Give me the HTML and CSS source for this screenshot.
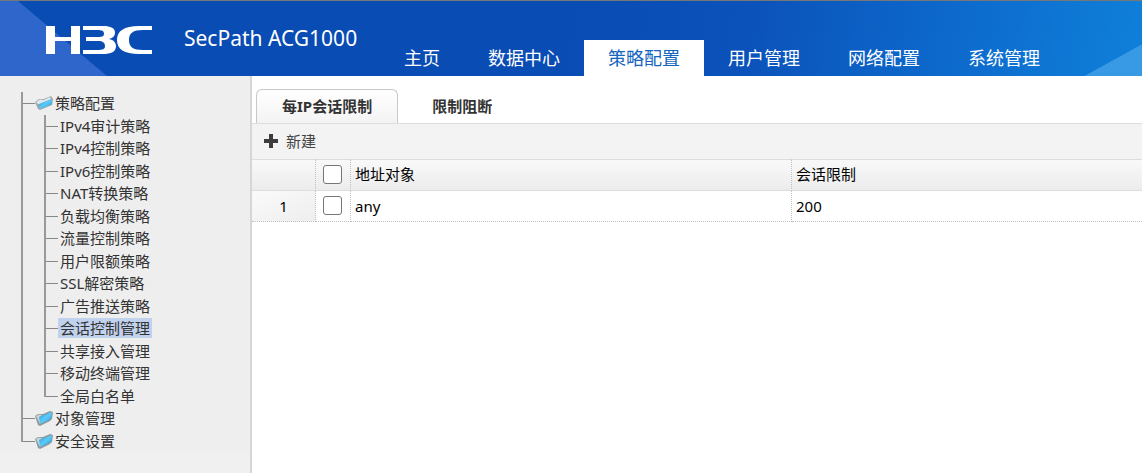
FILE: index.html
```html
<!DOCTYPE html>
<html lang="zh-CN">
<head>
<meta charset="utf-8">
<title>SecPath ACG1000</title>
<link rel="stylesheet" href="styles.css">
</head>
<body>
<svg class="defs" aria-hidden="true">
  <defs>
    <linearGradient id="sheet" x1="0" y1="0" x2="1" y2="1">
      <stop offset="0" stop-color="#2494d2"/>
      <stop offset="0.5" stop-color="#5ccbfa"/>
      <stop offset="1" stop-color="#1f8fcf"/>
    </linearGradient>
    <symbol id="folder-open" viewBox="0 0 18 16">
      <path d="M0 7L4 4L9 4L16 1L18 4L17 10L5 15L3 14Z" fill="#9aa6aa"/>
      <path d="M1 7L5 4.500L9 5L15 2L16 4L5 9L3 9Z" fill="#dfe9ec"/>
      <path d="M4 9L17 4L17 9L5 14Z" fill="url(#sheet)"/>
    </symbol>
    <symbol id="folder-closed" viewBox="0 0 18 16">
      <path d="M0 6L3 4L8 4L15 1L18 2L17 9L15 11L5 16L3 15Z" fill="#8c999e"/>
      <path d="M1 6L4 4.500L7 5L5 7L5 14Z" fill="#c9d3d6"/>
      <path d="M4 7L17 2L16 9L5 14Z" fill="url(#sheet)"/>
    </symbol>
  </defs>
</svg>
<header class="header">
  <svg class="logo" viewBox="0 0 106 28" role="img" aria-label="H3C">
    <g fill="#fff">
      <rect x="0" y="0" width="9" height="28"/>
      <rect x="25" y="0" width="9" height="28"/>
      <rect x="9" y="11" width="16" height="4"/>
      <path d="M37 0H57C65 0 69 2 69 7C69 10 67 12 63 13C68 14 70 17 70 20C70 26 65 28 57 28H37V24H51C57 24 59 23 59 20C59 17 57 15 52 15H40V11H52C57 11 58 10 58 7.500C58 5 56 4 51 4H37Z"/>
      <path d="M106 0V4H97C87 4 83 7 83 14C83 21 87 24 97 24H106V28H93C78 28 71 23 71 14C71 5 78 0 93 0Z"/>
    </g>
  </svg>
  <h1 class="product">SecPath ACG1000</h1>
  <nav class="nav">
    <a class="nav-link" href="#">主页</a>
    <a class="nav-link" href="#">数据中心</a>
    <a class="nav-link nav-active" href="#" aria-current="page">策略配置</a>
    <a class="nav-link" href="#">用户管理</a>
    <a class="nav-link" href="#">网络配置</a>
    <a class="nav-link" href="#">系统管理</a>
  </nav>
</header>
<div class="layout">
  <aside class="sidebar">
    <ul class="tree">
      <li class="branch">
        <a class="folder-link" href="#"><svg class="folder"><use href="#folder-open"/></svg>策略配置</a>
        <ul class="leaves">
          <li class="leaf"><a class="leaf-link" href="#">IPv4审计策略</a></li>
          <li class="leaf"><a class="leaf-link" href="#">IPv4控制策略</a></li>
          <li class="leaf"><a class="leaf-link" href="#">IPv6控制策略</a></li>
          <li class="leaf"><a class="leaf-link" href="#">NAT转换策略</a></li>
          <li class="leaf"><a class="leaf-link" href="#">负载均衡策略</a></li>
          <li class="leaf"><a class="leaf-link" href="#">流量控制策略</a></li>
          <li class="leaf"><a class="leaf-link" href="#">用户限额策略</a></li>
          <li class="leaf"><a class="leaf-link" href="#">SSL解密策略</a></li>
          <li class="leaf"><a class="leaf-link" href="#">广告推送策略</a></li>
          <li class="leaf"><a class="leaf-link leaf-active" href="#">会话控制管理</a></li>
          <li class="leaf"><a class="leaf-link" href="#">共享接入管理</a></li>
          <li class="leaf"><a class="leaf-link" href="#">移动终端管理</a></li>
          <li class="leaf"><a class="leaf-link" href="#">全局白名单</a></li>
        </ul>
      </li>
      <li class="branch"><a class="folder-link" href="#"><svg class="folder"><use href="#folder-closed"/></svg>对象管理</a></li>
      <li class="branch"><a class="folder-link" href="#"><svg class="folder"><use href="#folder-closed"/></svg>安全设置</a></li>
    </ul>
  </aside>
  <main class="main">
    <div class="tabs">
      <button class="tab tab-active" type="button">每IP会话限制</button>
      <button class="tab" type="button">限制阻断</button>
    </div>
    <div class="toolbar">
      <button class="add" type="button">
        <svg class="plus" viewBox="0 0 14 14" aria-hidden="true"><path d="M5 0H9V5H14V9H9V14H5V9H0V5H5Z" fill="#3c3c3c"/></svg>新建
      </button>
    </div>
    <table class="grid">
      <thead>
        <tr>
          <th class="num"></th>
          <th class="check"><input class="box" type="checkbox" aria-label="全选"></th>
          <th class="address">地址对象</th>
          <th>会话限制</th>
        </tr>
      </thead>
      <tbody>
        <tr>
          <td class="num">1</td>
          <td class="check"><input class="box" type="checkbox" aria-label="any"></td>
          <td class="address">any</td>
          <td>200</td>
        </tr>
      </tbody>
    </table>
  </main>
</div>
</body>
</html>
```
FILE: styles.css
```css
* {
  box-sizing: border-box;
}

body {
  margin: 0;
  min-height: 100vh;
  display: flex;
  flex-direction: column;
  background: #fff;
  color: #333;
  font: 15px "Noto Sans", "Noto Sans CJK SC", sans-serif;
}

a {
  color: inherit;
  text-decoration: none;
}

button {
  font: inherit;
  color: inherit;
  cursor: pointer;
}

.defs {
  position: absolute;
  width: 0;
  height: 0;
}

.header {
  display: flex;
  height: 76px;
  border-top: 1px solid #777;
  color: #fff;
  background:
    linear-gradient(to bottom right, transparent 50%, #3899e4 51%) right bottom / 58px 32px no-repeat,
    linear-gradient(100deg, #094cb4 0, #094cb4 50%, #0b52ba 65%, #0d6bcd 84%, #0f80da 100%);
  position: relative;
}

.header::before {
  content: "";
  position: absolute;
  inset: 0 auto 0 0;
  width: 107px;
  background: #2e66cb;
  clip-path: polygon(0 0, 18px 0, 107px 100%, 0 100%);
}

.logo {
  position: relative;
  width: 106px;
  height: 28px;
  margin: 25px 32px 0 46px;
}

.product {
  width: 196px;
  margin: 0;
  padding-top: 23px;
  font-size: 21px;
  line-height: 28px;
  font-weight: 400;
  white-space: nowrap;
}

.nav {
  display: flex;
  align-items: flex-end;
}

.nav-link {
  padding: 0 24px;
  font-size: 18px;
  line-height: 36px;
  white-space: nowrap;
}

.nav-active {
  background: #fff;
  color: #1464c0;
}

.layout {
  flex: 1;
  display: flex;
}

.sidebar {
  width: 252px;
  flex: none;
  background: #f0f0f0;
  border-right: 2px solid #d6d6d6;
}

.tree {
  margin: 0;
  padding: 16px 0 1px 21px;
  background: #eee;
  list-style: none;
  line-height: 1.5;
}

.branch {
  position: relative;
  padding-left: 14px;
}

.branch::before,
.leaf::before {
  content: "";
  position: absolute;
  top: 0;
  left: 0;
  width: 2px;
  height: 100%;
  background: #999;
}

.branch::after,
.leaf::after {
  content: "";
  position: absolute;
  top: 11px;
  left: 2px;
  width: 12px;
  height: 1px;
  background: #888;
}

.branch:last-child::before,
.leaf:last-child::before {
  height: 12px;
}

.folder-link {
  display: flex;
  align-items: center;
  gap: 2px;
}

.folder {
  width: 18px;
  height: 16px;
}

.leaves {
  margin: 0;
  padding: 0 0 0 9px;
  list-style: none;
}

.leaf {
  position: relative;
  display: flex;
  padding-left: 14px;
}

.leaf-link {
  padding: 0 2px;
}

.leaf-active {
  background: linear-gradient(#c1d2ee, #c1d2ee) center / 100% 20px no-repeat;
}

.main {
  flex: 1;
  min-width: 0;
}

.tabs {
  display: flex;
  padding: 13px 4px 0;
  border-bottom: 1px solid #ddd;
}

.tab {
  height: 34px;
  padding: 0 25px 2px;
  border: 1px solid transparent;
  border-bottom: 0;
  border-radius: 6px 6px 0 0;
  background: none;
  font-weight: 700;
}

.tab + .tab {
  padding: 0 33px 2px;
}

.tab-active {
  border-color: #c8c8c8;
  background: linear-gradient(#fff, #f3f3f3);
}

.toolbar {
  display: flex;
  height: 35px;
  padding: 0 12px 2px;
  background: #f3f3f3;
}

.add {
  display: flex;
  align-items: center;
  gap: 8px;
  padding: 0;
  border: 0;
  background: none;
  color: #444;
}

.plus {
  width: 14px;
  height: 14px;
}

.grid {
  width: 100%;
  table-layout: fixed;
  border-collapse: separate;
  border-spacing: 0;
  color: #000;
}

.grid th,
.grid td {
  height: 31px;
  padding: 0 4px;
  border-right: 1px dotted #c0c0c0;
  border-bottom: 1px dotted #c0c0c0;
  text-align: left;
  font-weight: 400;
  line-height: 20px;
}

.grid th {
  height: 32px;
  padding-bottom: 2px;
  border-top: 1px solid #ddd;
  border-bottom: 1px solid #ddd;
  background: linear-gradient(#f9f9f9, #ececec);
}

.grid th:last-child,
.grid td:last-child {
  border-right: 0;
}

.grid .num {
  width: 64px;
  text-align: center;
}

.grid td.num {
  background: linear-gradient(to bottom right, #fafafa, #eee);
}

.grid .check {
  width: 35px;
  padding: 0 1px 2px 0;
  text-align: center;
}

.grid .address {
  width: 441px;
}

.box {
  appearance: none;
  display: block;
  width: 19px;
  height: 19px;
  margin: 0 auto;
  border: 1px solid #767676;
  border-radius: 3px;
  background: #fff;
}

.box:checked {
  background: #1464c0;
}
```
